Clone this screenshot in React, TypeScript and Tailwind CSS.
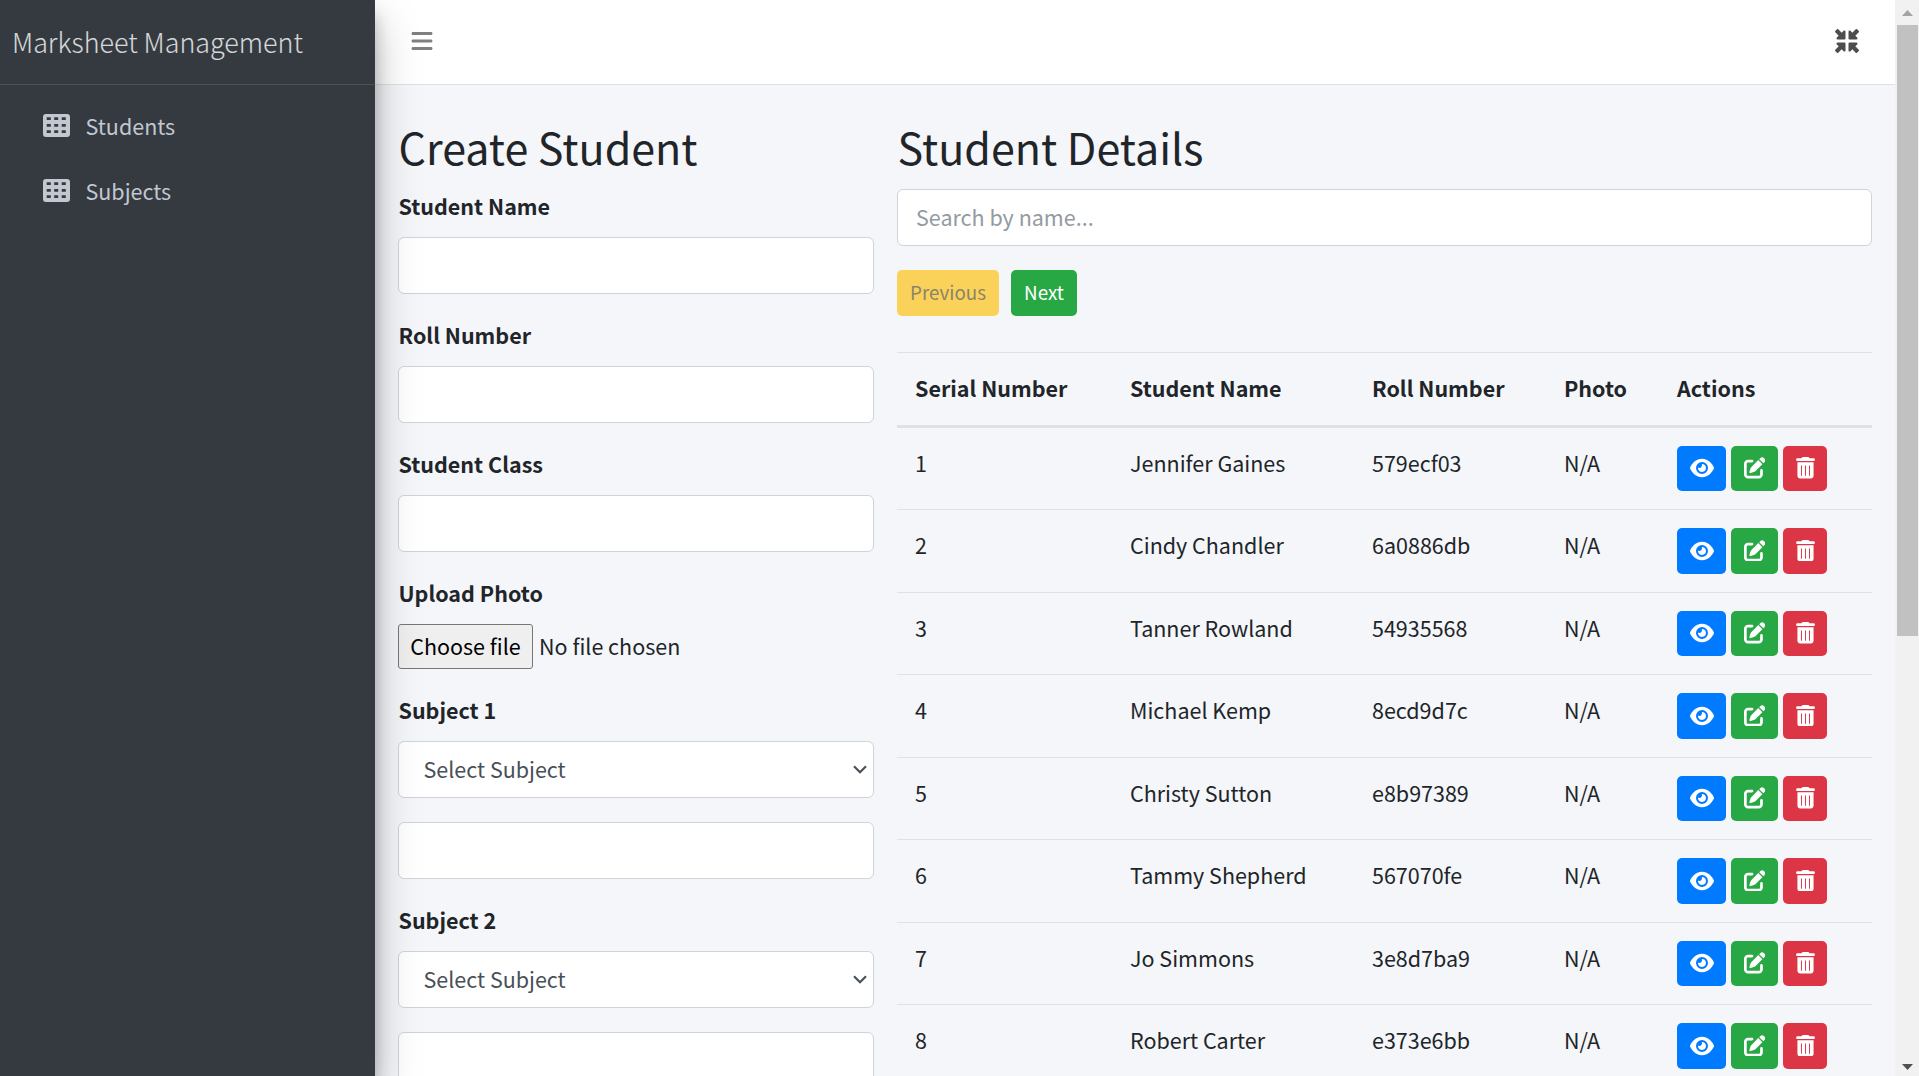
import type { ReactNode } from 'react';
import { FaBars, FaEye, FaMinimize, FaPenToSquare } from 'react-icons/fa6';

const students = [
  ['Jennifer Gaines', '579ecf03'],
  ['Cindy Chandler', '6a0886db'],
  ['Tanner Rowland', '54935568'],
  ['Michael Kemp', '8ecd9d7c'],
  ['Christy Sutton', 'e8b97389'],
  ['Tammy Shepherd', '567070fe'],
  ['Jo Simmons', '3e8d7ba9'],
  ['Robert Carter', 'e373e6bb'],
];

const columns = 'grid grid-cols-[215px_242px_192px_113px_213px]';

function GridIcon() {
  return (
    <svg className="mb-[4px] h-[23px] w-[27px]" viewBox="0 0 27 23">
      <path
        fill="currentColor"
        fillRule="evenodd"
        d="M3 0h21a3 3 0 0 1 3 3v17a3 3 0 0 1-3 3H3a3 3 0 0 1-3-3V3a3 3 0 0 1 3-3zM3.7 3.3v2.8h4.1V3.3zM11.2 3.3v2.8h4V3.3zM18.7 3.3v2.8h4.1V3.3zM3.7 9.9v2.8h4.1V9.9zM11.2 9.9v2.8h4V9.9zM18.7 9.9v2.8h4.1V9.9zM3.7 16.3v2.8h4.1v-2.8zM11.2 16.3v2.8h4v-2.8zM18.7 16.3v2.8h4.1v-2.8z"
      />
    </svg>
  );
}

function TrashIcon() {
  return (
    <svg className="mt-[-1px] h-[21.5px] w-[19px]" viewBox="0 0 448 512">
      <path
        fill="currentColor"
        fillRule="evenodd"
        d="M135 18C141 7 152 0 164 0h120c12 0 23 7 29 18l7 14h96c18 0 32 14 32 32s-14 32-32 32H32C14 96 0 82 0 64s14-32 32-32h96zM32 124h384v324c0 35-29 64-64 64H96c-35 0-64-29-64-64zM116 200v244h23V200zM212 200v244h23V200zM308 200v244h23V200z"
      />
    </svg>
  );
}

function NavItem({ label }: { label: string }) {
  return (
    <a className="flex h-[65px] items-center pl-[43px] text-[#c2c7d0]">
      <GridIcon />
      <span className="ml-[15.5px] pb-[3px] leading-[34px]">{label}</span>
    </a>
  );
}

function Label({ children }: { children: ReactNode }) {
  return <label className="mb-3 block pb-[2px] pl-[0.5px] font-bold leading-[34px]">{children}</label>;
}

function TextField() {
  return <input className="block h-[57px] w-full rounded-md border border-[#ced4da] bg-white px-[18px] outline-none" />;
}

function SelectField() {
  return (
    <div className="flex h-[57px] items-center justify-between rounded-md border border-[#ced4da] bg-white pl-[24.5px] pr-[6px] text-[#495057]">
      <span className="leading-[34px]">Select Subject</span>
      <svg className="h-[9px] w-[14px]" viewBox="0 0 14 9" fill="none" stroke="currentColor" strokeWidth="2.2">
        <path d="M1 1.2 7 7.2l6-6" />
      </svg>
    </div>
  );
}

function StudentForm() {
  return (
    <section className="w-[476px] shrink-0">
      <h2 className="mb-3 h-[57.6px] pl-[0.5px] text-[43px] leading-[54px]">Create Student</h2>
      <div className="flex flex-col gap-6">
        <div>
          <Label>Student Name</Label>
          <TextField />
        </div>
        <div>
          <Label>Roll Number</Label>
          <TextField />
        </div>
        <div>
          <Label>Student Class</Label>
          <TextField />
        </div>
        <div>
          <Label>Upload Photo</Label>
          <div className="flex h-[45px] items-center">
            <button className="h-[45px] w-[135px] rounded-[3px] border border-[#767676] bg-[#efefef] text-black">
              Choose file
            </button>
            <span className="ml-[6px] leading-[34px]">No file chosen</span>
          </div>
        </div>
        {['Subject 1', 'Subject 2'].map((subject) => (
          <div key={subject}>
            <Label>{subject}</Label>
            <SelectField />
            <div className="mt-6">
              <TextField />
            </div>
          </div>
        ))}
      </div>
    </section>
  );
}

function StudentTable() {
  return (
    <section className="w-[975px] shrink-0">
      <h2 className="mb-3 h-[57.6px] pl-[0.5px] text-[43px] leading-[54px]">Student Details</h2>
      <input
        className="block h-[57px] w-full rounded-md border border-[#ced4da] bg-white px-[18px] pb-[2px] outline-none placeholder:text-[#939ba2]"
        placeholder="Search by name..."
      />
      <div className="mt-6 flex gap-3 text-[18.8px]">
        <button className="h-[46px] w-[102px] rounded-[5px] bg-[#fad25a] pb-px text-[#8a8468]">Previous</button>
        <button className="h-[46px] w-[66px] rounded-[5px] bg-[#28a745] pb-px text-white">Next</button>
      </div>
      <div className="mt-9">
        <div className={`${columns} h-[76px] border-b-[3px] border-t border-[#dee2e6] pt-[18px] font-bold leading-[34px]`}>
          {['Serial Number', 'Student Name', 'Roll Number', 'Photo', 'Actions'].map((h) => (
            <span key={h} className="pl-[18px]">
              {h}
            </span>
          ))}
        </div>
        {students.map(([name, roll], i) => (
          <div
            key={roll}
            className={`${columns} h-[82.5px] items-start border-t border-[#dee2e6] pt-[18px] leading-[34px] nth-2:h-[81.3px] nth-2:border-t-0`}
          >
            <span className="pl-[18px]">{i + 1}</span>
            <span className="pl-[18px]">{name}</span>
            <span className="pl-[18px]">{roll}</span>
            <span className="pl-[18px]">N/A</span>
            <div className="flex gap-[5px] pl-[18px] text-white">
              <button className="flex h-[45.5px] w-[49px] items-center justify-center rounded-[5px] bg-[#007bff]">
                <FaEye className="mt-[-1px] size-[24px]" />
              </button>
              <button className="flex h-[45.5px] w-[47px] items-center justify-center rounded-[5px] bg-[#28a745]">
                <FaPenToSquare className="mt-[-1px] size-[21.5px]" />
              </button>
              <button className="flex h-[45.5px] w-[44px] items-center justify-center rounded-[5px] bg-[#dc3545]">
                <TrashIcon />
              </button>
            </div>
          </div>
        ))}
      </div>
    </section>
  );
}

function Scrollbar() {
  return (
    <div className="flex h-full w-6 shrink-0 flex-col items-center bg-[#f1f1f1]">
      <svg className="h-[25px] w-6 shrink-0" viewBox="0 0 24 25">
        <path d="M7 16 12.5 10 18 16z" fill="#a3a3a3" />
      </svg>
      <div className="ml-px h-[611px] w-[21px] bg-[#c1c1c1]" />
      <svg className="mt-auto h-[25px] w-6 shrink-0" viewBox="0 0 24 25">
        <path d="M7 13 12.5 19 18 13z" fill="#505050" />
      </svg>
    </div>
  );
}

export default function App() {
  return (
    <div className="flex h-[1076px] w-[1919px] overflow-hidden bg-[#f4f6f9] font-['Noto_Sans_CJK_SC','Source_Sans_Pro',sans-serif] text-[21.5px] text-[#212529]">
      <aside className="relative z-10 w-[375px] shrink-0 bg-[#343a40] shadow-[0_21px_42px_rgba(0,0,0,0.25),0_15px_15px_rgba(0,0,0,0.22)]">
        <div className="flex h-[85px] items-center border-b border-[#4b545c] pl-3 pt-px text-[26.9px] font-light text-white/80">
          Marksheet Management
        </div>
        <nav className="pt-[10px]">
          <NavItem label="Students" />
          <NavItem label="Subjects" />
        </nav>
      </aside>
      <div className="flex min-w-0 flex-1 flex-col">
        <header className="flex h-[85px] shrink-0 items-center justify-between border-b border-[#dee2e6] bg-white pb-[3px] pl-[34.5px] pr-9">
          <FaBars className="size-6 text-[#808080]" />
          <FaMinimize className="size-6 text-[#4d4d4d]" />
        </header>
        <main className="flex gap-[23px] pl-[23px] pt-[34.4px]">
          <StudentForm />
          <StudentTable />
        </main>
      </div>
      <Scrollbar />
    </div>
  );
}
